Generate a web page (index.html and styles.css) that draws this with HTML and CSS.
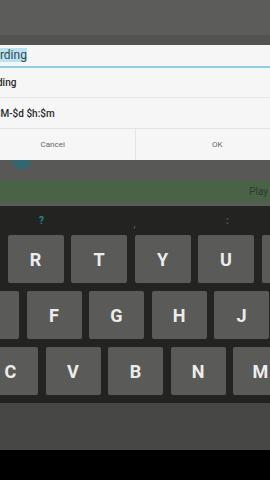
FILE: index.html
```html
<!DOCTYPE html>
<html lang="en">
<head>
  <meta charset="UTF-8">
  <meta name="viewport" content="width=device-width, initial-scale=1.0">
  <link rel="stylesheet" href="styles.css">
  <title>Rename recording</title>
</head>
<body>

  <div class="screen">
    <div class="app-top"></div>
    <div class="app-band"></div>

    <div class="dialog">
      <div class="field"><span class="field-text"><span class="sel">Recording</span></span></div>
      <div class="option option-first"><span class="option-text">Recording</span></div>
      <div class="option option-second"><span class="option-text">$Y-$M-$d $h:$m</span></div>
      <div class="actions">
        <button class="action">Cancel</button>
        <button class="action">OK</button>
      </div>
    </div>

    <div class="app-strip"><span class="dot"></span></div>
    <div class="app-play"><span class="play">Play</span></div>
    <div class="app-line"></div>

    <div class="keyboard">
      <div class="suggestions">
        <span class="hint hint-main">?</span>
        <span class="hint hint-low">,</span>
        <span class="hint">:</span>
      </div>

      <div class="row row-1">
        <div class="key">E</div>
        <div class="key">R</div>
        <div class="key">T</div>
        <div class="key">Y</div>
        <div class="key">U</div>
        <div class="key">I</div>
      </div>
      <div class="row row-2">
        <div class="key">D</div>
        <div class="key">F</div>
        <div class="key">G</div>
        <div class="key">H</div>
        <div class="key">J</div>
      </div>
      <div class="row row-3">
        <div class="key">C</div>
        <div class="key">V</div>
        <div class="key">B</div>
        <div class="key">N</div>
        <div class="key">M</div>
      </div>
      <div class="space-bar"></div>
    </div>
    <div class="nav"></div>
  </div>

</body>
</html>
```

FILE: styles.css
```css
body {
  margin: 0;
  font-family: Roboto, 'Noto Sans', sans-serif;
  background: #000;
}

.screen {
  width: 270px;
  height: 480px;
  overflow: hidden;
  display: flex;
  flex-direction: column;
}

.app-top {
  height: 35px;
  background: #5c5d5a;
}

.app-band {
  height: 10px;
  background: #535451;
}

.dialog {
  position: relative;
  z-index: 2;
  width: 328px;
  margin-left: -29px;
  height: 115px;
  background: #f6f6f6;
  display: flex;
  flex-direction: column;
}

.field {
  height: 21px;
  border-bottom: 2px solid #8fd0e8;
  display: flex;
  align-items: flex-end;
  padding-left: 2px;
}

.field-text {
  font-size: 12px;
  color: #354a52;
  line-height: 13px;
  margin-bottom: 4px;
}

.sel {
  background: #b7e3f2;
}

.option {
  display: flex;
  align-items: center;
  font-size: 10px;
  font-weight: 500;
  color: #2b2b2b;
}

.option-first {
  height: 29px;
  border-bottom: 1px solid #e6e6e6;
  padding-left: 0;
}

.option-second {
  height: 30px;
  padding-left: 9px;
}

.actions {
  flex: 1;
  display: flex;
  border-top: 1px solid #e2e2e2;
}

.action {
  flex: 1;
  border: none;
  background: #f6f6f6;
  font-family: Roboto, sans-serif;
  font-size: 8px;
  color: #666;
  padding: 0;
}

.action + .action {
  border-left: 1px solid #e4e4e4;
}

.app-strip {
  position: relative;
  height: 20px;
  background: #585957;
}

.dot {
  position: absolute;
  left: 13px;
  top: -9px;
  width: 18px;
  height: 18px;
  border-radius: 50%;
  background: #2d6a70;
}

.app-play {
  height: 23px;
  background: #4a6347;
  display: flex;
  align-items: center;
  justify-content: flex-end;
  padding-right: 2px;
}

.play {
  font-size: 10px;
  color: #2c3a2b;
}

.app-line {
  height: 3px;
  background: #5b5c58;
}

.keyboard {
  height: 244px;
  background: #232422;
  display: flex;
  flex-direction: column;
}

.suggestions {
  height: 29px;
  display: grid;
  grid-template-columns: repeat(3, 93px);
  align-items: center;
  justify-items: center;
  margin-left: -5px;
  font-size: 10px;
  font-weight: bold;
  color: #555;
}

.hint-main {
  color: #2f8593;
}

.hint-low {
  margin-top: 6px;
}

.row {
  display: flex;
  gap: 7.5px;
  height: 48px;
  margin-bottom: 8px;
}

.key {
  flex: none;
  width: 55px;
  background: #5a5b59;
  border-radius: 2px;
  display: flex;
  align-items: center;
  justify-content: center;
  font-size: 18px;
  font-weight: bold;
  color: #ececec;
}

.row-1 {
  margin-left: -56px;
}

.row-1 .key {
  width: 56px;
}

.row-2 {
  margin-left: -36px;
}

.row-3 {
  margin-left: -17px;
}

.space-bar {
  height: 47px;
  background: #474846;
}

.nav {
  flex: 1;
  background: #000;
}
```
